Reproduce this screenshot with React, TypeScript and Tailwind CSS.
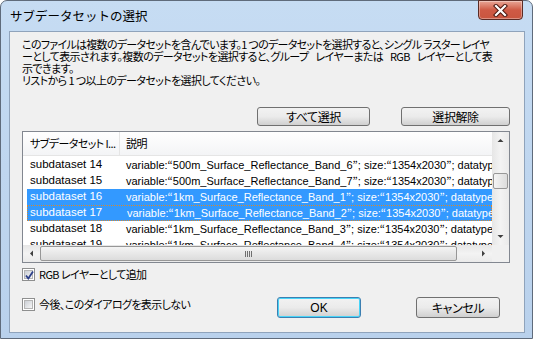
import React from "react";

const F = "font-['Liberation_Sans','Noto_Sans_CJK_JP',sans-serif]";
const JP = "font-['Noto_Sans_CJK_JP',sans-serif] [font-feature-settings:'palt']";

const rows = [
  { id: "subdataset 14", v: "500m_Surface_Reflectance_Band_6", sel: false, focus: false },
  { id: "subdataset 15", v: "500m_Surface_Reflectance_Band_7", sel: false, focus: false },
  { id: "subdataset 16", v: "1km_Surface_Reflectance_Band_1", sel: true, focus: false },
  { id: "subdataset 17", v: "1km_Surface_Reflectance_Band_2", sel: true, focus: true },
  { id: "subdataset 18", v: "1km_Surface_Reflectance_Band_3", sel: false, focus: false },
  { id: "subdataset 19", v: "1km_Surface_Reflectance_Band_4", sel: false, focus: false },
];

function Btn({ children, w, focus }: { children: React.ReactNode; w: string; focus?: boolean }) {
  return (
    <div
      className={`${w} h-full rounded-[3px] border ${
        focus ? "border-[#3c7fb1] shadow-[inset_0_0_0_1px_#48d4f8]" : "border-[#707070]"
      } bg-gradient-to-b from-[#f2f2f2] via-[#ebebeb] to-[#d0d0d0] flex items-center justify-center text-[12px] tracking-[-0.4px] text-black ${JP}`}
    >
      {children}
    </div>
  );
}

function Check({ checked }: { checked?: boolean }) {
  return (
    <div className="w-[13px] h-[13px] border border-[#8e8f8f] bg-white p-[1px] shrink-0">
      <div className="w-full h-full bg-gradient-to-br from-[#cbcfd5] to-[#f6f6f6] border border-[#b4b4b4] relative">
        {checked && (
          <svg className="absolute -left-[2px] -top-[2px]" width="13" height="13" viewBox="0 0 13 13">
            <path d="M3 6.5 L5.3 9.5 L10 2.5" fill="none" stroke="#2d4089" strokeWidth="1.8" />
          </svg>
        )}
      </div>
    </div>
  );
}

function Arrow({ dir }: { dir: "up" | "down" | "left" | "right" }) {
  const p = {
    up: "M0.5 4 L3.5 1 L6.5 4 Z",
    down: "M0.5 1 L3.5 4 L6.5 1 Z",
    left: "M4 0.5 L1 3.5 L4 6.5 Z",
    right: "M1 0.5 L4 3.5 L1 6.5 Z",
  }[dir];
  const vert = dir === "up" || dir === "down";
  return (
    <svg width={vert ? 7 : 5} height={vert ? 5 : 7} viewBox={vert ? "0 0 7 5" : "0 0 5 7"}>
      <path d={p} fill="#3f3f3f" />
    </svg>
  );
}

function Q({ c }: { c: string }) {
  return <span className="font-['Noto_Sans_CJK_JP',sans-serif]">{c}</span>;
}

export default function App() {
  return (
    <div className={`w-[533px] h-[339px] overflow-hidden bg-white ${F}`}>
      <div className="w-[533px] h-[339px] rounded-t-[7px] border border-[#5f6b7b] bg-gradient-to-b from-[#c6dcf3] via-[#bfd6ef] to-[#b9d1ec] flex flex-col relative">
        {/* title bar */}
        <div className="h-[30px] shrink-0 flex items-center pl-[9px] pt-[1px]">
          <span className="text-[12.5px] text-black font-['Noto_Sans_CJK_JP',sans-serif]">サブデータセットの選択</span>
        </div>
        {/* close button */}
        <div className="absolute top-[-1px] right-[9px] w-[45px] h-[20px] rounded-b-[4px] border border-[#5a2b25] bg-gradient-to-b from-[#e8a596] via-[#cf5a45] to-[#c9553f] shadow-[inset_0_0_0_1px_rgba(255,255,255,0.35)] flex items-center justify-center">
          <svg width="15" height="13" viewBox="0 0 15 13">
            <path d="M3 2 L12 11 M12 2 L3 11" stroke="#4a1710" strokeWidth="4.2" strokeLinecap="square" />
            <path d="M3 2 L12 11 M12 2 L3 11" stroke="#ffffff" strokeWidth="2.2" strokeLinecap="square" />
          </svg>
        </div>
        {/* client area */}
        <div className="ml-[8px] w-[516px] h-[302px] border border-[#8fa3bb] bg-[#f0f0f0] flex flex-col pl-[12px] pr-[14px]">
          <div className={`pt-[6px] text-[11px] leading-[12px] text-black whitespace-nowrap tracking-[-0.6px] ${JP}`}>
            <div className="tracking-[-0.7px]">このファイルは複数のデータセットを含んでいます。1 つのデータセットを選択すると、シングル ラスター レイヤ</div>
            <div className="[word-spacing:5px]">ーとして表示されます。複数のデータセットを選択すると、グループ レイヤーまたは RGB レイヤーとして表</div>
            <div>示できます。</div>
            <div>リストから 1 つ以上のデータセットを選択してください。</div>
          </div>
          {/* buttons */}
          <div className="mt-[21px] h-[19px] flex justify-end gap-[31px] shrink-0">
            <Btn w="w-[113px]">すべて選択</Btn>
            <Btn w="w-[109px]">選択解除</Btn>
          </div>
          {/* list */}
          <div className="mt-[5px] w-[488px] h-[132px] border border-[#828790] bg-white flex flex-col shrink-0">
            <div className="flex h-[113px]">
              <div className="w-[469px] flex flex-col overflow-hidden">
                {/* header */}
                <div className="h-[24px] shrink-0 flex border-b border-[#e5e5e5] bg-gradient-to-b from-white to-[#f3f4f6] text-[11px] tracking-[-0.6px] text-black">
                  <div className={`w-[97px] shrink-0 flex items-center pl-[7px] border-r border-[#e5e5e5] whitespace-nowrap overflow-hidden ${JP}`}>
                    サブデータセット I...
                  </div>
                  <div className={`flex items-center pl-[6px] ${JP}`}>説明</div>
                </div>
                {/* rows */}
                <div className="pt-[1px] flex flex-col">
                  {rows.map((r) => (
                    <div
                      key={r.id}
                      className={`h-[16px] shrink-0 ml-[4px] flex items-center whitespace-nowrap ${
                        r.sel ? "bg-[#3399ff] text-white" : "text-black"
                      } ${r.focus ? "border border-dotted border-[#d9892d]" : ""}`}
                    >
                      <div className={`w-[93px] shrink-0 text-[11.5px] ${r.focus ? "pl-[2px]" : "pl-[3px]"}`}>{r.id}</div>
                      <div className="pl-[6px] text-[11px]">
                        variable:<Q c="“" />
                        {r.v}
                        <Q c="”" />; size:<Q c="“" />1354x2030<Q c="”" />; datatype:<Q c="“" />int16<Q c="”" />
                      </div>
                    </div>
                  ))}
                </div>
              </div>
              {/* vertical scrollbar */}
              <div className="w-[17px] h-[113px] shrink-0 bg-gradient-to-r from-[#e6e6e6] via-[#f3f3f3] to-[#eaeaea] flex flex-col">
                <div className="h-[17px] flex items-center justify-center">
                  <Arrow dir="up" />
                </div>
                <div className="h-[24px]" />
                <div className="mx-[1px] h-[16px] rounded-[2px] border border-[#979797] bg-gradient-to-r from-[#f4f4f4] to-[#dcdcdc]" />
                <div className="flex-1" />
                <div className="h-[17px] flex items-center justify-center">
                  <Arrow dir="down" />
                </div>
              </div>
            </div>
            {/* horizontal scrollbar */}
            <div className="h-[17px] flex shrink-0">
              <div className="w-[469px] flex bg-gradient-to-b from-[#e6e6e6] via-[#f3f3f3] to-[#eaeaea]">
                <div className="w-[17px] flex items-center justify-center">
                  <Arrow dir="left" />
                </div>
                <div className="w-[417px] my-[1px] rounded-[2px] border border-[#979797] bg-gradient-to-b from-[#f4f4f4] to-[#dcdcdc] flex items-center justify-center">
                  <div className="flex gap-[1px]">
                    <div className="w-[1px] h-[6px] bg-[#6f6f6f]" />
                    <div className="w-[1px] h-[6px] bg-[#6f6f6f]" />
                    <div className="w-[1px] h-[6px] bg-[#6f6f6f]" />
                    <div className="w-[1px] h-[6px] bg-[#6f6f6f]" />
                  </div>
                </div>
                <div className="flex-1" />
                <div className="w-[17px] flex items-center justify-center">
                  <Arrow dir="right" />
                </div>
              </div>
              <div className="w-[17px] bg-[#f0f0f0]" />
            </div>
          </div>
          {/* checkbox 1 */}
          <div className="mt-[5px] h-[13px] flex items-center gap-[4px] shrink-0">
            <Check checked />
            <span className={`text-[11px] tracking-[-0.6px] text-black whitespace-nowrap ${JP}`}>RGB レイヤーとして追加</span>
          </div>
          {/* bottom row */}
          <div className="mt-[16px] h-[21px] flex items-center shrink-0">
            <div className="flex items-center gap-[4px] self-start mt-[1px]">
              <Check />
              <span className={`text-[11px] tracking-[-0.6px] leading-[13px] text-black whitespace-nowrap ${JP}`}>今後、このダイアログを表示しない</span>
            </div>
            <div className="ml-auto flex h-full gap-[55px] mr-[10px]">
              <Btn w="w-[84px]" focus>
                <span className="font-['Liberation_Sans',sans-serif] tracking-normal">OK</span>
              </Btn>
              <Btn w="w-[84px]">キャンセル</Btn>
            </div>
          </div>
        </div>
      </div>
    </div>
  );
}
